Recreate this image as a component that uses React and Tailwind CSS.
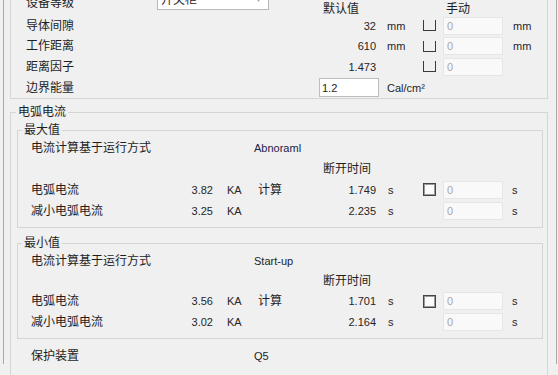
import React from "react";

const FONT = "font-['Liberation_Sans','Noto_Sans_CJK_SC',sans-serif]";

function OpenCheck() {
  return <div className="w-[13px] h-[11px] border-l-[1.5px] border-r-[1.5px] border-b-[1.5px] border-[#3a3a3a]" />;
}

function Check() {
  return <div className="w-[13px] h-[13px] border border-[#444] bg-[#fbfbfb] shadow-[inset_0_0_0_1px_#9a9a9a]" />;
}

function DisInput({ h = "h-[18px]" }) {
  return (
    <div className={`w-[60px] ${h} bg-[#f9f9f9] border border-[#e6e6e6] flex items-center pl-[3px] text-[11px] text-[#a8a8a8]`}>
      0
    </div>
  );
}

function TopRow({ label, value, unit, unit2, h }) {
  return (
    <div className={`flex items-center ${h}`}>
      <div className="w-[293px] text-[12px]">{label}</div>
      <div className="w-[60px] text-right pr-[3px] text-[11px] text-[#262626]">{value}</div>
      <div className="w-[44px] pl-[8px] text-[11px] text-[#262626]">{unit}</div>
      <OpenCheck />
      <div className="w-[7px]" />
      <DisInput />
      <div className="pl-[10px] text-[11px] text-[#262626]">{unit2}</div>
    </div>
  );
}

function ArcRow({ label, val, t, calc, check, h }) {
  return (
    <div className={`flex items-center ${h}`}>
      <div className="w-[149px] text-[12px]">{label}</div>
      <div className="w-[33px] text-right text-[11px] text-[#262626]">{val}</div>
      <div className="w-[45px] pl-[14px] text-[11px] text-[#262626]">KA</div>
      <div className="w-[24px] text-[12px]">{calc ? "计算" : ""}</div>
      <div className="w-[94px] text-right text-[11px] text-[#262626]">{t}</div>
      <div className="w-[47px] pl-[12px] text-[11px] text-[#262626]">s</div>
      {check ? <Check /> : <div className="w-[13px]" />}
      <div className="w-[7px]" />
      <DisInput h="h-[18px]" />
      <div className="pl-[9px] text-[11px] text-[#262626]">s</div>
    </div>
  );
}

function InnerBox({ title, mode, modeColor, rows, pb }) {
  return (
    <div className={`relative border border-[#d5d5d5] pt-[7px] ${pb} pl-[13px]`}>
      <div className="absolute left-[4px] -top-[9px] px-[2px] bg-[#f0f0f0] text-[12px] leading-[16px]">{title}</div>
      <div className="flex items-center h-[20px]">
        <div className="w-[223px] text-[12px]">电流计算基于运行方式</div>
        <div className={`text-[11px] ${modeColor}`}>{mode}</div>
      </div>
      <div className={`flex items-center ${rows[0]}`}>
        <div className="pl-[292px] text-[12px]">断开时间</div>
      </div>
      {rows.slice(1).map((r, i) => (
        <ArcRow key={i} {...r} />
      ))}
    </div>
  );
}

export default function App() {
  return (
    <div className={`w-[558px] h-[375px] overflow-hidden bg-[#f0f0f0] text-[#1e1e1e] leading-[16px] ${FONT}`}>
      <div className="ml-[3px] w-[554px] h-[375px] border-l border-r border-[#a8a8a8] pl-[6px] pr-[8px]">
        {/* Top group */}
        <div className="-mt-[11px] border border-[#d5d5d5] pl-[15px]">
          <div className="flex items-start h-[25px]">
            <div className="w-[131px] mt-[5px] text-[12px]">设备等级</div>
            <div className="w-[112px] h-[20px] bg-white border border-[#b9b9b9] flex items-center justify-between pl-[3px] pr-[6px]">
              <span className="text-[12px]">开关柜</span>
              <span className="text-[7px] text-[#9a9a9a]">▼</span>
            </div>
            <div className="ml-[54px] mt-[11px] text-[12px]">默认值</div>
            <div className="ml-[87px] mt-[11px] text-[12px]">手动</div>
          </div>
          <TopRow label="导体间隙" value="32" unit="mm" unit2="mm" h="h-[21px]" />
          <TopRow label="工作距离" value="610" unit="mm" unit2="mm" h="h-[20px]" />
          <TopRow label="距离因子" value="1.473" unit="" unit2="" h="h-[21px]" />
          <div className="flex items-center h-[21px]">
            <div className="w-[293px] text-[12px]">边界能量</div>
            <div className="w-[60px] h-[19px] bg-white border border-[#bdbdbd] flex items-center pl-[2px] text-[11px]">1.2</div>
            <div className="pl-[8px] text-[11px] text-[#262626]">Cal/cm²</div>
          </div>
        </div>

        {/* Arc current group */}
        <div className="relative mt-[13px] border border-[#d5d5d5] pt-[17px] pl-[6px] pr-[4px] h-[300px]">
          <div className="absolute left-[5px] -top-[9px] px-[2px] bg-[#f0f0f0] text-[12px] leading-[16px]">电弧电流</div>
          <InnerBox
            title="最大值"
            mode="Abnoraml"
            modeColor="text-[#1c2448]"
            pb="pb-[6px]"
            rows={[
              "h-[21px]",
              { label: "电弧电流", val: "3.82", t: "1.749", calc: true, check: true, h: "h-[21px]" },
              { label: "减小电弧电流", val: "3.25", t: "2.235", h: "h-[21px]" },
            ]}
          />
          <div className="mt-[15px]">
            <InnerBox
              title="最小值"
              mode="Start-up"
              modeColor="text-[#1e1e1e]"
              pb="pb-[5px]"
              rows={[
                "h-[20px]",
                { label: "电弧电流", val: "3.56", t: "1.701", calc: true, check: true, h: "h-[20px]" },
                { label: "减小电弧电流", val: "3.02", t: "2.164", h: "h-[22px]" },
              ]}
            />
          </div>
          <div className="flex items-center h-[20px] mt-[7px] pl-[14px]">
            <div className="w-[223px] text-[12px]">保护装置</div>
            <div className="text-[11px]">Q5</div>
          </div>
        </div>
      </div>
    </div>
  );
}
